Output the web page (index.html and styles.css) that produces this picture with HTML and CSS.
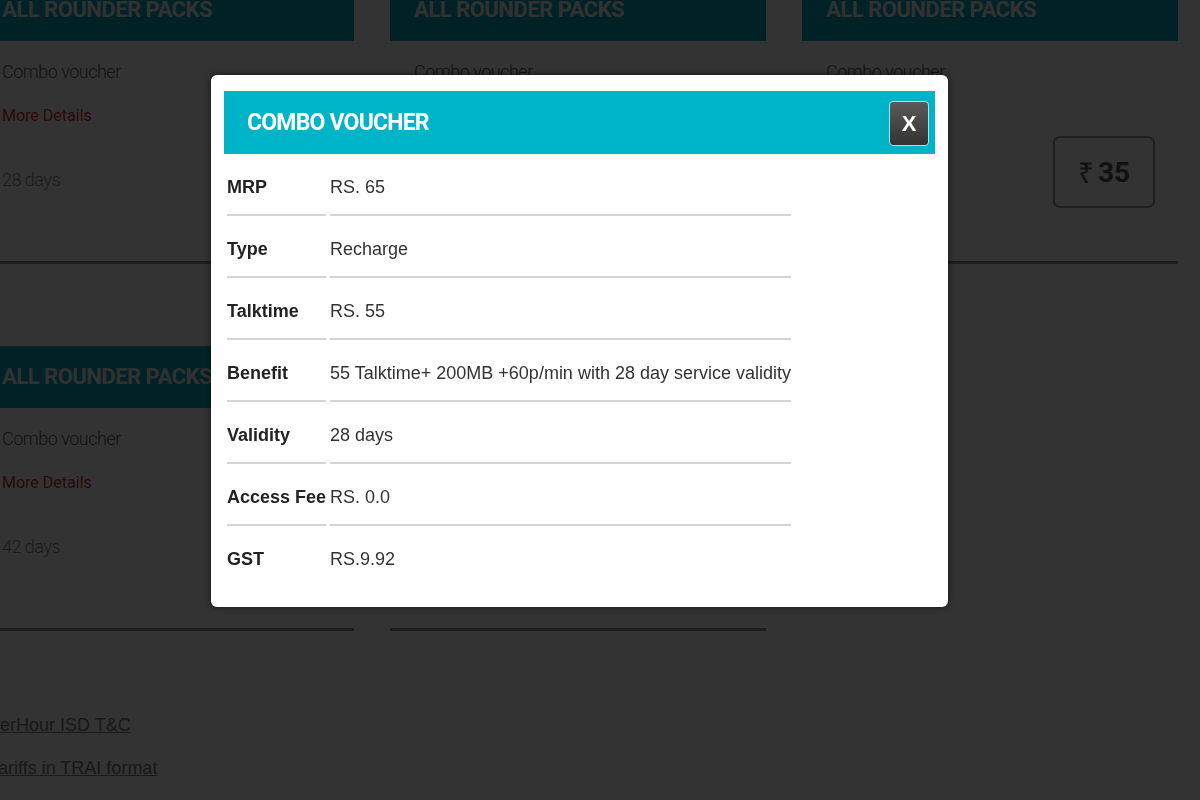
FILE: index.html
```html
<!DOCTYPE html>
<html lang="en">
<head>
    <meta charset="UTF-8">
    <meta name="viewport" content="width=device-width, initial-scale=1.0">
    <title>Combo Voucher</title>
    <link rel="stylesheet" href="styles.css">
</head>
<body>

<div class="packs">
    <div class="pack">
        <div class="pack-title">ALL ROUNDER PACKS</div>
        <div class="pack-body">
            <div class="pack-info">
                <p class="pack-name">Combo voucher</p>
                <a class="more-link" href="#">More Details</a>
                <p class="validity">28 days</p>
            </div>
        </div>
    </div>
    <div class="pack">
        <div class="pack-title">ALL ROUNDER PACKS</div>
        <div class="pack-body">
            <div class="pack-info">
                <p class="pack-name">Combo voucher</p>
                <a class="more-link" href="#">More Details</a>
                <p class="validity">28 days</p>
            </div>
        </div>
    </div>
    <div class="pack">
        <div class="pack-title">ALL ROUNDER PACKS</div>
        <div class="pack-body">
            <div class="pack-info">
                <p class="pack-name">Combo voucher</p>
                <a class="more-link" href="#">More Details</a>
                <p class="validity">28 days</p>
            </div>
            <div class="price"><span class="rupee">&#8377;</span>35</div>
        </div>
    </div>
    <div class="pack">
        <div class="pack-title">ALL ROUNDER PACKS</div>
        <div class="pack-body">
            <div class="pack-info">
                <p class="pack-name">Combo voucher</p>
                <a class="more-link" href="#">More Details</a>
                <p class="validity">42 days</p>
            </div>
        </div>
    </div>
    <div class="pack">
        <div class="pack-title">ALL ROUNDER PACKS</div>
        <div class="pack-body">
            <div class="pack-info">
                <p class="pack-name">Combo voucher</p>
                <a class="more-link" href="#">More Details</a>
                <p class="validity">28 days</p>
            </div>
        </div>
    </div>
</div>

<div class="links">
    <a class="link link-power" href="#">PowerHour ISD T&amp;C</a>
    <a class="link link-trai" href="#">Tariffs in TRAI format</a>
</div>

<!-- fond sombre + popup -->
<div class="overlay"></div>
<div class="modal">
    <div class="modal-head">
        <h2>COMBO VOUCHER</h2>
        <button class="close-btn">X</button>
    </div>
    <table class="details">
        <tr><th>MRP</th><td>RS. 65</td></tr>
        <tr><th>Type</th><td>Recharge</td></tr>
        <tr><th>Talktime</th><td>RS. 55</td></tr>
        <tr><th>Benefit</th><td>55 Talktime+ 200MB +60p/min with 28 day service validity</td></tr>
        <tr><th>Validity</th><td>28 days</td></tr>
        <tr><th>Access Fee</th><td>RS. 0.0</td></tr>
        <tr><th>GST</th><td>RS.9.92</td></tr>
    </table>
</div>

</body>
</html>
```

FILE: styles.css
```css
body {
    margin: 0;
    background-color: #ffffff;
    font-family: 'Liberation Sans', Arial, sans-serif;
    height: 800px;
    overflow: hidden;
}
.packs {
    display: grid;
    grid-template-columns: repeat(3, 376px);
    column-gap: 36px;
    row-gap: 82px;
    margin: -21px 0 0 -22px;
}
.pack {
    border-bottom: 3px solid #8a8a8a;
}
.pack-title {
    background-color: #00aabe;
    color: #f2f6f6;
    height: 62px;
    line-height: 62px;
    padding-left: 24px;
    font-family: 'Roboto', sans-serif;
    font-weight: 700;
    font-size: 22px;
    letter-spacing: -0.5px;
}
.pack-body {
    display: flex;
    justify-content: space-between;
    align-items: flex-start;
    height: 220px;
    padding: 0 23px 0 24px;
    font-family: 'Roboto', sans-serif;
}
.pack-info p {
    margin: 0;
}
.pack-name {
    padding-top: 19px;
    font-size: 18px;
    font-weight: 300;
    line-height: 24px;
    letter-spacing: -0.5px;
    color: #5a5a5a;
}
.more-link {
    display: block;
    margin-top: 20px;
    font-size: 16px;
    line-height: 24px;
    color: #d32f2f;
    text-decoration: none;
}
.pack-info .validity {
    margin-top: 40px;
    font-size: 18px;
    font-weight: 300;
    line-height: 24px;
    letter-spacing: -0.5px;
    color: #8c8c8c;
}
.price {
    box-sizing: border-box;
    width: 102px;
    height: 72px;
    margin-top: 95px;
    border: 2px solid #999999;
    border-radius: 7px;
    display: flex;
    justify-content: center;
    align-items: center;
    gap: 4px;
    font-size: 28px;
    font-weight: 700;
    color: #555555;
}
.price .rupee {
    font-family: 'Noto Sans', sans-serif;
    font-weight: 400;
}
.links {
    margin-top: 82px;
}
.link {
    display: block;
    font-size: 18px;
    line-height: 24px;
    color: #777777;
}
.link-power {
    margin-left: -35px;
}
.link-trai {
    margin-top: 19px;
    margin-left: -11px;
}
.overlay {
    position: fixed;
    top: 0;
    left: 0;
    right: 0;
    bottom: 0;
    background-color: rgba(0, 0, 0, 0.8);
}
.modal {
    position: absolute;
    top: 75px;
    left: 211px;
    width: 737px;
    box-sizing: border-box;
    padding: 16px 13px 21px;
    background-color: #ffffff;
    border-radius: 6px;
    box-shadow: 0 0 6px rgba(0, 0, 0, 0.6);
}
.modal-head {
    display: flex;
    justify-content: space-between;
    align-items: center;
    height: 63px;
    padding: 0 6px 0 23px;
    background-color: #00b4c8;
}
.modal-head h2 {
    margin: 0;
    color: #ffffff;
    font-family: 'Roboto', sans-serif;
    font-weight: 700;
    font-size: 23px;
    letter-spacing: -0.8px;
}
.close-btn {
    width: 40px;
    height: 45px;
    margin-top: 2px;
    border: 1px solid #9ee6ee;
    border-radius: 4px;
    background: linear-gradient(#5a5a5a, #333333);
    color: #ffffff;
    font-family: 'Liberation Sans', Arial, sans-serif;
    font-weight: 700;
    font-size: 22px;
    padding: 0;
}
.details {
    border-collapse: separate;
    border-spacing: 4px 0;
    margin-left: -1px;
    font-size: 18px;
}
.details th,
.details td {
    height: 54px;
    padding: 6px 0 0;
    line-height: 22px;
    text-align: left;
    white-space: nowrap;
    border-bottom: 2px solid #d4d4d4;
}
.details th {
    font-weight: 700;
    color: #222222;
}
.details td {
    color: #333333;
}
.details tr:last-child th,
.details tr:last-child td {
    border-bottom: none;
}
```
